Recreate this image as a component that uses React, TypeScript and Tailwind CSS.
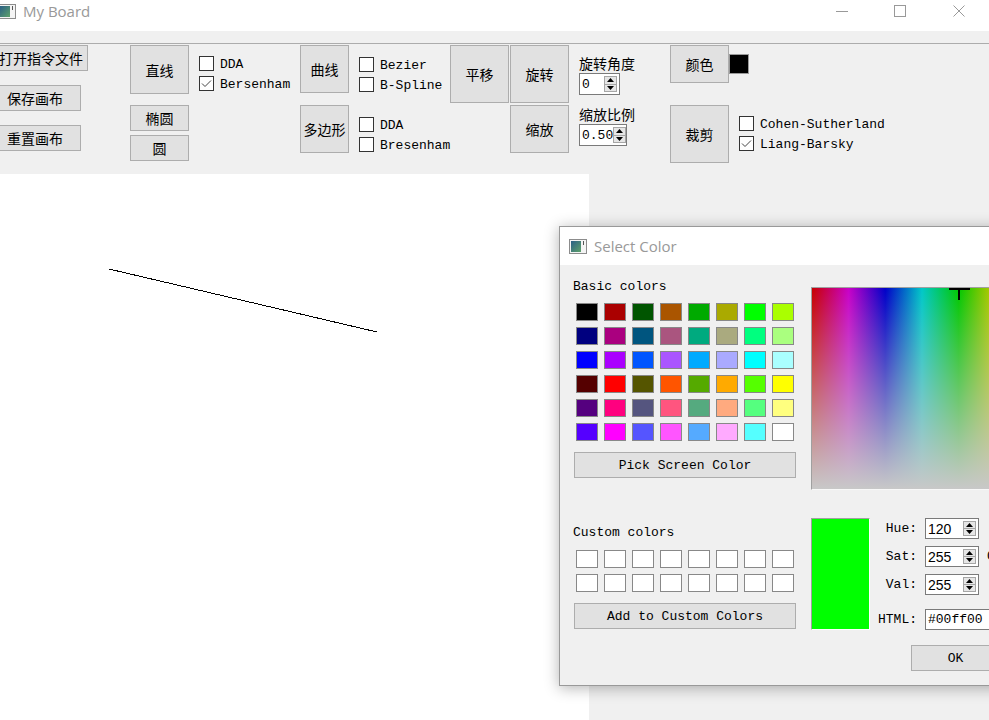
import React from "react";
import clsx from "clsx";

const mono = "font-['Liberation_Mono','Noto_Sans_CJK_SC',monospace] text-[13px]";
const cjk = "font-['Noto_Sans_CJK_SC',sans-serif] text-[14px]";
const ui = "font-['Open_Sans','Noto_Sans',sans-serif] text-[15px] text-[#999]";

// Qt standard colours, laid out row by row as in the dialog
const basic = [
  ["#000000", "#aa0000", "#005500", "#aa5500", "#00aa00", "#aaaa00", "#00ff00", "#aaff00"],
  ["#00007f", "#aa007f", "#00557f", "#aa557f", "#00aa7f", "#aaaa7f", "#00ff7f", "#aaff7f"],
  ["#0000ff", "#aa00ff", "#0055ff", "#aa55ff", "#00aaff", "#aaaaff", "#00ffff", "#aaffff"],
  ["#550000", "#ff0000", "#555500", "#ff5500", "#55aa00", "#ffaa00", "#55ff00", "#ffff00"],
  ["#55007f", "#ff007f", "#55557f", "#ff557f", "#55aa7f", "#ffaa7f", "#55ff7f", "#ffff7f"],
  ["#5500ff", "#ff00ff", "#5555ff", "#ff55ff", "#55aaff", "#ffaaff", "#55ffff", "#ffffff"],
];

function AppIcon({ className }: { className?: string }) {
  return (
    <svg width="18" height="15" viewBox="0 0 18 15" className={clsx("shrink-0", className)}>
      <defs>
        <linearGradient id="ig" x1="0" y1="0" x2="1" y2="1">
          <stop offset="0" stopColor="#2b5f86" />
          <stop offset="1" stopColor="#5ea26a" />
        </linearGradient>
      </defs>
      <rect x="0.5" y="0.5" width="17" height="14" fill="#f4f4f4" stroke="#8c8c8c" />
      <rect x="2" y="2" width="10" height="11" fill="url(#ig)" />
      <rect x="14" y="2" width="1" height="4" fill="#555" />
    </svg>
  );
}

function Btn({ className, children }: { className: string; children: React.ReactNode }) {
  return (
    <div
      className={clsx(
        "flex shrink-0 items-center justify-center whitespace-nowrap border border-[#adadad] bg-[#e1e1e1] leading-none text-black",
        className
      )}
    >
      {children}
    </div>
  );
}

function Check({ label, checked }: { label: string; checked?: boolean }) {
  return (
    <div className="flex h-[20px] items-center">
      <div className="flex h-[15px] w-[15px] shrink-0 items-center justify-center border border-[#333] bg-white">
        {checked && (
          <svg width="13" height="13" viewBox="0 0 13 13">
            <polyline points="2,6.5 5,9.5 11,3.5" fill="none" stroke="#444" strokeWidth="1" />
          </svg>
        )}
      </div>
      <span className={clsx(mono, "ml-[6px] mt-[2px] whitespace-nowrap leading-none")}>{label}</span>
    </div>
  );
}

function Arrows() {
  return (
    <div className="flex h-full w-[13px] shrink-0 flex-col border border-[#a6a6a6] bg-[#e6e6e6]">
      <div className="flex flex-1 items-center justify-center border-b border-[#a6a6a6]">
        <svg width="7" height="4" viewBox="0 0 7 4">
          <path d="M3.5 0L7 4H0z" fill="#000" />
        </svg>
      </div>
      <div className="flex flex-1 items-center justify-center">
        <svg width="7" height="4" viewBox="0 0 7 4">
          <path d="M0 0h7L3.5 4z" fill="#000" />
        </svg>
      </div>
    </div>
  );
}

function Spin({ value, className, textClass }: { value: string; className: string; textClass: string }) {
  return (
    <div className={clsx("flex shrink-0 items-center border border-[#7a7a7a] bg-white py-[2px] pl-[2px] pr-[2px]", className)}>
      <span className={clsx("flex-1 whitespace-nowrap leading-none", textClass)}>{value}</span>
      <Arrows />
    </div>
  );
}

function Toolbar() {
  return (
    <div className="flex h-[130px] items-start">
      <div className="flex w-[88px] shrink-0 flex-col items-end pt-[1px]">
        <Btn className={clsx(cjk, "h-[26px] w-[94px]")}>打开指令文件</Btn>
        <Btn className={clsx(cjk, "mr-[7px] mt-[14px] h-[26px] w-[92px]")}>保存画布</Btn>
        <Btn className={clsx(cjk, "mr-[7px] mt-[14px] h-[26px] w-[92px]")}>重置画布</Btn>
      </div>

      <div className="ml-[42px] flex w-[59px] shrink-0 flex-col pt-[1px]">
        <Btn className={clsx(cjk, "h-[49px] w-full")}>直线</Btn>
        <Btn className={clsx(cjk, "mt-[11px] h-[26px] w-full")}>椭圆</Btn>
        <Btn className={clsx(cjk, "mt-[4px] h-[26px] w-full")}>圆</Btn>
      </div>

      <div className="ml-[10px] flex w-[101px] shrink-0 flex-col pt-[9px]">
        <Check label="DDA" />
        <Check label="Bersenham" checked />
      </div>

      <div className="flex w-[49px] shrink-0 flex-col pt-[1px]">
        <Btn className={clsx(cjk, "h-[48px] w-full")}>曲线</Btn>
        <Btn className={clsx(cjk, "mt-[12px] h-[48px] w-full")}>多边形</Btn>
      </div>

      <div className="ml-[10px] flex w-[91px] shrink-0 flex-col pt-[10px]">
        <Check label="Bezier" />
        <Check label="B-Spline" />
        <div className="mt-[20px]">
          <Check label="DDA" />
          <Check label="Bresenham" />
        </div>
      </div>

      <div className="flex w-[59px] shrink-0 flex-col pt-[1px]">
        <Btn className={clsx(cjk, "h-[58px] w-full")}>平移</Btn>
      </div>

      <div className="ml-[1px] flex w-[59px] shrink-0 flex-col pt-[1px]">
        <Btn className={clsx(cjk, "h-[58px] w-full")}>旋转</Btn>
        <Btn className={clsx(cjk, "mt-[2px] h-[48px] w-full")}>缩放</Btn>
      </div>

      <div className="ml-[10px] flex w-[91px] shrink-0 flex-col items-start pt-[9px]">
        <span className={clsx(cjk, "h-[20px] leading-[20px]")}>旋转角度</span>
        <Spin value="0" className="h-[22px] w-[41px]" textClass={mono} />
        <span className={clsx(cjk, "mt-[9px] h-[20px] leading-[20px]")}>缩放比例</span>
        <Spin value="0.50" className="h-[22px] w-[48px]" textClass={mono} />
      </div>

      <div className="flex w-[59px] shrink-0 flex-col pt-[1px]">
        <Btn className={clsx(cjk, "h-[38px] w-full")}>颜色</Btn>
        <Btn className={clsx(cjk, "mt-[22px] h-[58px] w-full")}>裁剪</Btn>
      </div>

      <div className="flex shrink-0 flex-col items-start pt-[10px]">
        <div className="h-[20px] w-[20px] border border-[#9a9a9a] bg-black" />
        <div className="ml-[10px] mt-[39px]">
          <Check label="Cohen-Sutherland" />
          <Check label="Liang-Barsky" checked />
        </div>
      </div>
    </div>
  );
}

function FieldRow({ label, value, extra, className }: { label: string; value: string; extra?: string; className?: string }) {
  return (
    <div className={clsx("flex h-[21px] items-center", className)}>
      <span className={clsx(mono, "w-[47px] text-right leading-none")}>{label}</span>
      <Spin value={value} className="ml-[8px] h-[21px] w-[54px]" textClass="font-['Liberation_Sans',sans-serif] text-[14px]" />
      {extra && <span className={clsx(mono, "ml-[8px] shrink-0 leading-none")}>{extra}</span>}
    </div>
  );
}

function ColorDialog() {
  return (
    <div className="absolute left-[559px] top-[226px] h-[460px] w-[540px] border border-[#999] bg-[#f0f0f0] shadow-[0_2px_14px_rgba(0,0,0,0.3)]">
      <div className="flex h-[38px] items-center bg-white pl-[9px]">
        <AppIcon />
        <span className={clsx(ui, "ml-[7px] leading-[20px]")}>Select Color</span>
      </div>

      <div className="flex items-start">
        {/* swatches */}
        <div className="ml-[13px] flex w-[223px] shrink-0 flex-col items-start pt-[14px]">
          <span className={clsx(mono, "leading-[16px]")}>Basic colors</span>
          <div className="ml-[3px] mt-[8px] grid grid-cols-[repeat(8,22px)] gap-[6px]">
            {basic.flat().map((c, i) => (
              <div key={i} className="h-[18px] border border-[#888]" style={{ backgroundColor: c }} />
            ))}
          </div>
          <Btn className={clsx(mono, "ml-[1px] mt-[11px] h-[26px] w-[222px]")}>Pick Screen Color</Btn>
          <span className={clsx(mono, "mt-[47px] leading-[16px]")}>Custom colors</span>
          <div className="ml-[3px] mt-[9px] grid grid-cols-[repeat(8,22px)] gap-[6px]">
            {Array.from({ length: 16 }).map((_, i) => (
              <div key={i} className="h-[18px] border border-[#888] bg-white" />
            ))}
          </div>
          <Btn className={clsx(mono, "ml-[1px] mt-[11px] h-[26px] w-[222px]")}>Add to Custom Colors</Btn>
        </div>

        {/* picker */}
        <div className="ml-[15px] flex shrink-0 flex-col items-start pt-[22px]">
          <div className="relative h-[203px] w-[221px] border-b border-l border-t border-[#a0a0a0] border-b-[#f8f8f8] bg-[image:linear-gradient(to_bottom,rgba(200,200,200,0),#c8c8c8),linear-gradient(to_right,#c80000,#c800c8_16.67%,#0000c8_33.33%,#00c8c8_50%,#00c800_66.67%,#c8c800_83.33%,#c80000)]">
            <svg width="21" height="12" viewBox="0 0 21 12" className="absolute left-[137px] top-0">
              <rect x="0" y="0" width="21" height="2" fill="#000" />
              <rect x="9" y="0" width="2" height="12" fill="#000" />
            </svg>
          </div>

          <div className="mt-[28px] flex items-start">
            <div className="h-[112px] w-[59px] shrink-0 border border-[#a0a0a0] border-b-white border-r-white bg-[#00ff00]" />
            <div className="flex flex-col">
              <FieldRow label="Hue:" value="120" />
              <FieldRow label="Sat:" value="255" extra="Green:" className="mt-[7px]" />
              <FieldRow label="Val:" value="255" className="mt-[7px]" />
              <div className="mt-[14px] flex h-[21px] items-center">
                <span className={clsx(mono, "w-[47px] text-right leading-none")}>HTML:</span>
                <div className="ml-[8px] flex h-[21px] w-[90px] items-center border border-[#7a7a7a] bg-white pl-[2px]">
                  <span className={clsx(mono, "leading-none")}>#00ff00</span>
                </div>
              </div>
            </div>
          </div>

          <Btn className={clsx(mono, "ml-[100px] mt-[15px] h-[26px] w-[89px]")}>OK</Btn>
        </div>
      </div>
    </div>
  );
}

export default function App() {
  return (
    <div className="relative h-[720px] w-[989px] overflow-hidden bg-[#f0f0f0] text-black">
      <div className="h-[31px] bg-white">
        <div className="flex h-[22px] items-center">
          <AppIcon className="-ml-[2px]" />
          <span className={clsx(ui, "ml-[7px] leading-[20px]")}>My Board</span>
          <div className="ml-auto flex h-full">
            <div className="flex w-[58px] items-center justify-center">
              <svg width="12" height="1" viewBox="0 0 12 1">
                <rect width="12" height="1" fill="#999" />
              </svg>
            </div>
            <div className="flex w-[58px] items-center justify-center">
              <svg width="12" height="12" viewBox="0 0 12 12">
                <rect x="0.5" y="0.5" width="11" height="11" fill="none" stroke="#999" />
              </svg>
            </div>
            <div className="flex w-[60px] items-center justify-center">
              <svg width="12" height="12" viewBox="0 0 12 12">
                <path d="M0.5 0.5L11.5 11.5M11.5 0.5L0.5 11.5" stroke="#999" strokeWidth="1" />
              </svg>
            </div>
          </div>
        </div>
      </div>
      <div className="h-[13px] border-b border-[#acacac]" />

      <Toolbar />

      <div className="h-[546px] w-[589px] bg-white">
        <svg width="589" height="546" className="block">
          <line x1="109" y1="95" x2="377" y2="158" stroke="#000" strokeWidth="1" shapeRendering="crispEdges" />
        </svg>
      </div>

      <ColorDialog />
    </div>
  );
}
